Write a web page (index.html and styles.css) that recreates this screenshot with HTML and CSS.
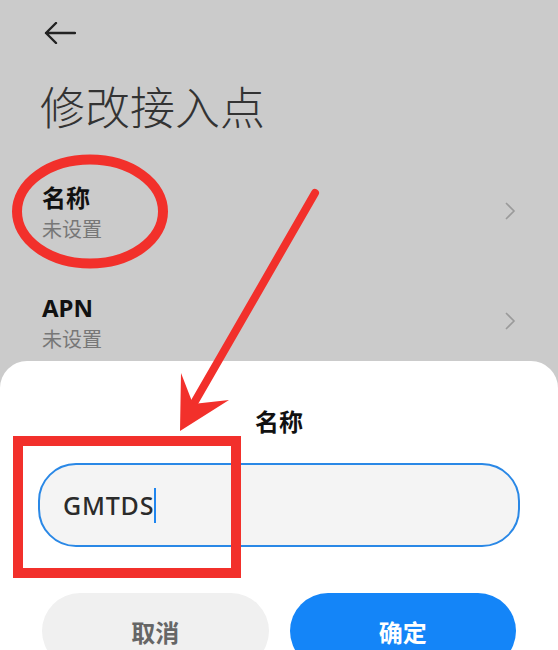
FILE: index.html
```html
<!DOCTYPE html>
<html lang="zh-CN">
<head>
<meta charset="utf-8">
<title>修改接入点</title>
<link rel="stylesheet" href="styles.css">
</head>
<body>
<div class="screen">
  <div class="topbar">
    <svg class="back" width="32" height="22" viewBox="0 0 32 22"><path d="M12 1 L2 11 L12 21 M2 11 H31" fill="none" stroke="#222" stroke-width="2.4" stroke-linecap="round" stroke-linejoin="round"/></svg>
  </div>
  <h1 class="title">修改接入点</h1>
  <div class="list">
    <div class="row">
      <div class="row-text">
        <div class="row-title">名称</div>
        <div class="row-sub">未设置</div>
      </div>
      <svg class="chev" width="12" height="20" viewBox="0 0 12 20"><path d="M2 2 L10 10 L2 18" fill="none" stroke="#9a9a9a" stroke-width="1.6"/></svg>
    </div>
    <div class="row">
      <div class="row-text">
        <div class="row-title">APN</div>
        <div class="row-sub">未设置</div>
      </div>
      <svg class="chev" width="12" height="20" viewBox="0 0 12 20"><path d="M2 2 L10 10 L2 18" fill="none" stroke="#9a9a9a" stroke-width="1.6"/></svg>
    </div>
  </div>

  <div class="sheet">
    <div class="sheet-title">名称</div>
    <div class="field"><span class="field-text">GMTDS</span><span class="caret"></span></div>
    <div class="actions">
      <div class="btn btn-cancel">取消</div>
      <div class="btn btn-ok">确定</div>
    </div>
  </div>

  <svg class="marks" width="558" height="650" viewBox="0 0 558 650">
    <ellipse cx="90" cy="211.5" rx="73" ry="52" fill="none" stroke="#f2302b" stroke-width="10"/>
    <line x1="315" y1="193" x2="190" y2="410" stroke="#f2302b" stroke-width="8" stroke-linecap="round"/>
    <polygon points="180,431 181,373 193,404 229,400" fill="#f2302b"/>
    <rect x="18" y="441" width="218" height="132" fill="none" stroke="#f2302b" stroke-width="10"/>
  </svg>
</div>
</body>
</html>
```

FILE: styles.css
```css
html, body {
  margin: 0;
  padding: 0;
}
body {
  width: 558px;
  height: 650px;
  overflow: hidden;
  background: #cbcbcb;
  font-family: "Noto Sans CJK SC", "Noto Sans", sans-serif;
}
.screen {
  position: relative;
  width: 558px;
  height: 650px;
  overflow: hidden;
  background: #cbcbcb;
}
.topbar {
  height: 66px;
  display: flex;
  align-items: center;
  padding-left: 44px;
}
.back {
  display: block;
}
.title {
  margin: 10px 0 0 40px;
  font-size: 45px;
  line-height: 60px;
  font-weight: 300;
  color: #333;
}
.list {
  margin-top: 23px;
}
.row {
  height: 110px;
  display: flex;
  align-items: center;
  justify-content: space-between;
  padding: 0 42px 0 42px;
}
.row-text {
  display: flex;
  flex-direction: column;
  gap: 4px;
}
.row-title {
  font-family: "Noto Sans", "Noto Sans CJK SC", sans-serif;
  font-size: 24px;
  line-height: 28px;
  font-weight: 700;
  color: #111;
}
.row-sub {
  font-family: "Noto Sans", "Noto Sans CJK SC", sans-serif;
  font-size: 20px;
  line-height: 28px;
  color: #777;
}
.chev {
  display: block;
  margin-bottom: 6px;
}
.sheet {
  position: absolute;
  left: 0;
  right: 0;
  top: 361px;
  bottom: 0;
  background: #fff;
  border-radius: 27px 27px 0 0;
  padding-top: 44px;
}
.sheet-title {
  text-align: center;
  font-size: 24px;
  line-height: 32px;
  font-weight: 700;
  color: #111;
}
.field {
  margin: 26px 38px 0 38px;
  height: 80px;
  border: 2px solid #2a88e6;
  border-radius: 38px;
  background: #f4f4f4;
  display: flex;
  align-items: center;
  padding-left: 23px;
}
.field-text {
  font-family: "Noto Sans", sans-serif;
  font-size: 25px;
  font-weight: 500;
  letter-spacing: 0.8px;
  color: #2b2b2b;
}
.caret {
  display: inline-block;
  width: 2px;
  height: 35px;
  background: #1f86f0;
}
.actions {
  display: flex;
  gap: 21px;
  margin: 46px 42px 0 42px;
}
.btn {
  flex: 1;
  height: 76px;
  border-radius: 38px;
  display: flex;
  align-items: center;
  justify-content: center;
  font-size: 24px;
  font-weight: 700;
}
.btn-cancel {
  background: #f0f0f0;
  color: #666;
}
.btn-ok {
  background: #1485f8;
  color: #fff;
}
.marks {
  position: absolute;
  left: 0;
  top: 0;
  pointer-events: none;
}
```
